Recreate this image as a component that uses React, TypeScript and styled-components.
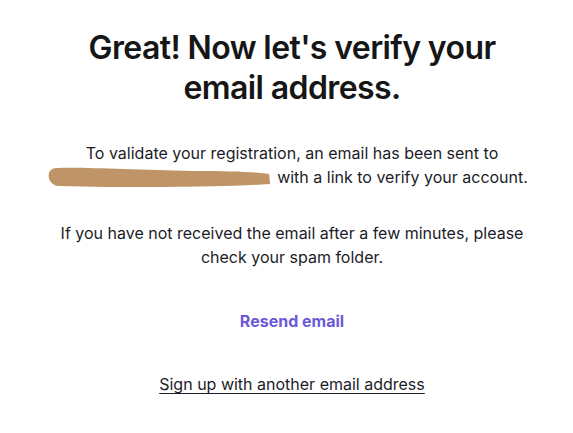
import React from "react"
import styled, { createGlobalStyle } from "styled-components"

const GlobalStyle = createGlobalStyle`
body {
  margin: 0;
  background: #ffffff;
  font-family: Inter, "Noto Sans", sans-serif;
}
`

const Page = styled.div`
width: 573px;
height: 433px;
display: flex;
flex-direction: column;
align-items: center;
padding: 28px 0 0 11px;
box-sizing: border-box;
text-align: center;
color: #1c1c28;
`

const Title = styled.h1`
margin: 0;
width: 440px;
font-family: Inter, sans-serif;
font-weight: 600;
font-size: 32px;
line-height: 40px;
letter-spacing: -0.6px;
color: #161616;
`

const Text = styled.p<{ $top: number }>`
margin: ${p => p.$top}px 0 0;
width: 490px;
font-size: 16px;
line-height: 24px;
`

const Redacted = styled.span`
position: relative;
display: inline-block;
width: 216px;
height: 16px;
vertical-align: -2px;
margin-right: 5px;
`

const Smudge = styled.svg`
position: absolute;
left: -9px;
top: -4px;
`

const Resend = styled.button`
margin-top: 42px;
border: none;
background: none;
padding: 0;
font-family: Inter, sans-serif;
font-size: 16px;
font-weight: 700;
color: #6a5ad8;
cursor: pointer;
`

const SignUp = styled.a`
margin-top: 43px;
font-size: 16px;
color: #1c1c28;
text-decoration: underline;
text-underline-offset: 3px;
`

export default function App() {
  return (
    <>
      <GlobalStyle />
      <Page>
        <Title>Great! Now let's verify your email address.</Title>
        <Text $top={33}>
          To validate your registration, an email has been sent to{" "}
          <Redacted>
            <Smudge width="226" height="24" viewBox="0 0 232 24" preserveAspectRatio="none">
              <path
                d="M10 3 C40 2 90 5 150 6 C190 6 215 7 228 9 L229 19 C200 21 160 22 120 22 C80 22 40 22 12 21 C2 20 0 10 3 6 C5 4 7 3 10 3 Z"
                fill="#bf9567"
              />
            </Smudge>
          </Redacted>
          with a link to verify your account.
        </Text>
        <Text $top={32}>
          If you have not received the email after a few minutes, please check your spam folder.
        </Text>
        <Resend>Resend email</Resend>
        <SignUp href="#">Sign up with another email address</SignUp>
      </Page>
    </>
  )
}
